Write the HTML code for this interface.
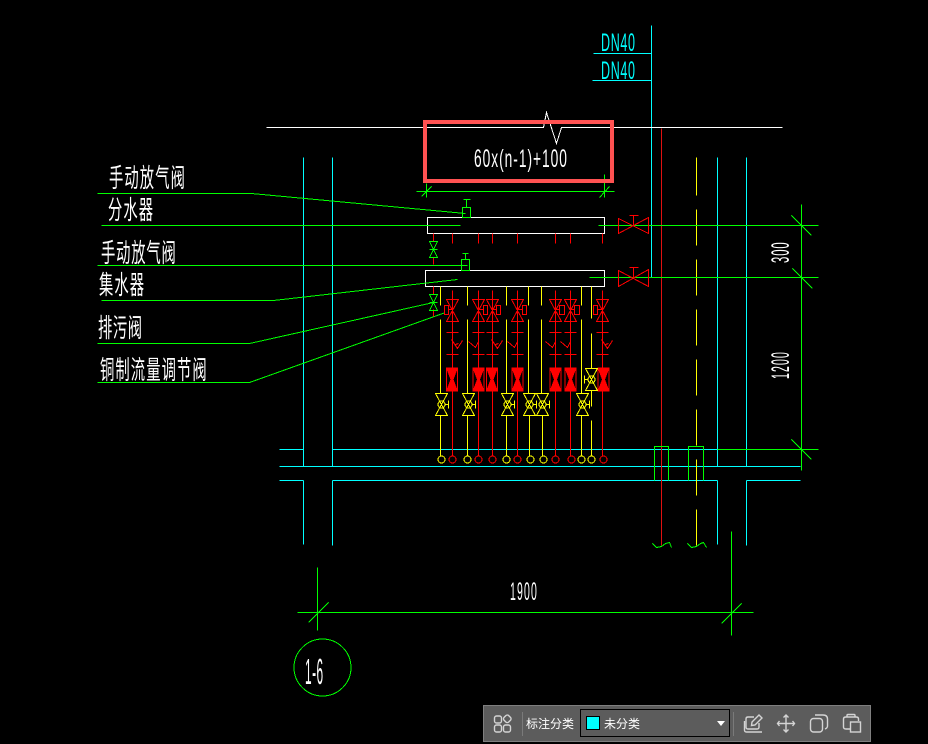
<!DOCTYPE html>
<html><head><meta charset="utf-8"><style>
html,body{margin:0;padding:0;background:#000;width:928px;height:744px;overflow:hidden}
svg{position:absolute;left:0;top:0}
.c{font-family:"Noto Sans CJK SC","Liberation Sans",sans-serif;fill:#fff;font-size:26px}
.l{font-family:"Liberation Sans",sans-serif;fill:#fff}
.tb{position:absolute;left:483px;top:705px;width:386px;height:35px;background:#5c5c5c;border:1px solid #7f7f7f}
.t{position:absolute;font:12px/16px "Liberation Sans","Noto Sans CJK SC",sans-serif;color:#fff;white-space:nowrap}
.sep{position:absolute;top:6px;width:1px;height:24px;background:#7a7a7a}
.sel{position:absolute;left:96px;top:3px;width:148px;height:26px;border:1px solid #000;background:#5c5c5c}
.sw{position:absolute;left:5px;top:6px;width:12px;height:12px;background:#0ff;border:1px solid #000}
.ar{position:absolute;left:136px;top:11px;width:0;height:0;border-left:4.5px solid transparent;border-right:4.5px solid transparent;border-top:5px solid #fff}
</style></head><body>
<svg width="928" height="744" viewBox="0 0 928 744" fill="none">
<defs>
<g id="rv" stroke="#f00"><path d="M-6 -11H6L-6 11H6Z"/></g>
<g id="rf"><rect x="-6" y="-12" width="12" height="24" fill="#f00"/><path d="M-5 -9L-1.5 0L-5 9ZM5 -9L1.5 0L5 9Z" fill="#000"/></g>
<g id="yv" stroke="#ff0"><path d="M-6 -11H6L-6 11H6Z"/><circle r="3.5"/><path d="M3 0H7M7 -4V4"/></g>
<g id="gv" stroke="#0f0"><path d="M-4 -8H4L-4 8H4Z"/><path d="M-4 0H4"/></g>
<g id="yr" stroke="#f00"><path d="M-1 -9L5 0L10 -8M3 -4L6 -5"/></g>
<g id="yl" stroke="#f00"><path d="M-10 -7L-3 -1L0 -7"/></g>
<g id="tk" stroke="#0f0"><path d="M-10 -10L10 10"/></g>
<g id="tk2" stroke="#0f0"><path d="M-10 10L10 -10"/></g>
</defs>
<g shape-rendering="crispEdges" transform="translate(.5 .5)">
<g stroke="#0ff">
<path d="M303 157V466M332 157V466M303 480V544M332 480V545"/>
<path d="M717 157V466M746 157V466M717 480V544M746 480V545"/>
<path d="M279 449H303M332 449H717M279 466H800M279 480H303M332 480H717M746 480H800"/>
<path d="M651 25V277M593 53H651M592 80H651"/>
</g>
<path d="M661 128V545" stroke="#e01010"/>
<path d="M696 157V195M696 209V245M696 259V295M696 309V345M696 359V395M696 409V445M696 459V495M696 509V545" stroke="#ff0"/>
<path d="M266 127H543L546 112L556 143L561 127H782" stroke="#fff"/>
<rect x="427" y="217" width="177" height="16" stroke="#fff"/>
<rect x="425" y="270" width="179" height="16" stroke="#fff"/>
<g stroke="#0f0">
<path d="M101 225H460M598 225H818M97 265H467M589 277H818M717 449H818M801 204V470"/>
<path d="M97 193H251L465 213M101 300H273L457 279M97 343H249L433 302M97 382H249L445 312"/>
<path d="M416 191H614M426 183V197M604 174V197"/>
<path d="M297 612H753M317 567V630M731 531V635"/>
<path d="M462 207H470V217H462ZM466 199V207M463 199H470M461 259H469V270H461ZM465 253V259M462 253H468"/>
<path d="M654 480V446H668V480M688 480V446H703V480"/>
<path d="M652 543L656 547L661 546L665 543L669 542L671 547M687 543L691 547L696 546L700 543L703 542L706 547"/>
<circle cx="322" cy="667" r="28.5"/>
</g>
<use href="#tk" x="801" y="225"/><use href="#tk" x="802" y="278"/><use href="#tk" x="801" y="449"/>
<use href="#tk2" x="318" y="612"/><use href="#tk2" x="731" y="613"/>
<path d="M421 196L431 186M599 197L609 186" stroke="#0f0"/>
<path d="M433 233V241M433 257V264M433 286V294M433 309V316" stroke="#f00"/>
<use href="#gv" x="433" y="249"/><use href="#gv" x="433" y="302"/>
<g stroke="#f00">
<path d="M452 233V243M478 233V243M492 233V243M517 233V243M555 233V243M570 233V243M602 233V243"/>
<path d="M452 290V455M478 290V455M492 290V455M517 290V455M555 290V455M570 290V455M602 290V455"/>
<path d="M446 332H458M472 332H484M486 332H498M511 332H523M549 332H561M564 332H576M596 332H608"/>
<path d="M446 354H458M472 354H484M486 354H498M511 354H523M549 354H561M564 354H576M596 354H608"/>
<path d="M618 218L648 233V217L618 233ZM633 225V215M629 215H638"/>
<path d="M618 270L648 286V269L618 286ZM633 278V267M629 267H638"/>
</g>
<g stroke="#ff0">
<path d="M440 286V305M467 286V305M506 286V305M528 286V305M541 286V305M581 286V305M591 286V318"/>
<path d="M440 319V393M467 319V393M506 319V393M528 319V393M541 319V393M581 319V393M591 333V368M591 390V406M591 420V455"/>
<path d="M440 415V455M467 415V455M506 415V455M529 415V455M542 415V455M581 415V455"/>
</g>
<use href="#rv" x="452" y="310"/><use href="#rv" x="478" y="310"/><use href="#rv" x="492" y="310"/><use href="#rv" x="517" y="310"/><use href="#rv" x="555" y="310"/><use href="#rv" x="570" y="310"/><use href="#rv" x="602" y="310"/>
<path stroke="#f00" d="M448 309H452M478 309H483M492 309H496M517 309H522M555 309H559M570 309H574M597 309H602"/>
<path fill="#000" stroke="#f00" d="M444 305h4v9h-4ZM483 305h4v9h-4ZM496 305h4v9h-4ZM522 305h4v9h-4ZM559 305h5v9h-5ZM574 305h5v9h-5ZM593 305h4v9h-4Z"/>
<use href="#yr" x="452" y="348"/><use href="#yl" x="478" y="348"/><use href="#yr" x="492" y="348"/><use href="#yl" x="517" y="348"/><use href="#yl" x="555" y="348"/><use href="#yl" x="570" y="348"/><use href="#yr" x="602" y="348"/>
<use href="#rf" x="451.5" y="379"/><use href="#rf" x="478" y="379"/><use href="#rf" x="491.5" y="379"/><use href="#rf" x="517" y="379"/><use href="#rf" x="555" y="379"/><use href="#rf" x="570" y="379"/><use href="#rf" x="603" y="379"/>
<use href="#yv" x="441" y="404"/><use href="#yv" x="468" y="404"/><use href="#yv" x="507" y="404"/><use href="#yv" x="529" y="404"/><use href="#yv" x="542" y="404"/><use href="#yv" x="582" y="404"/>
<g stroke="#ff0"><path d="M585 368H597L585 390H597Z"/><circle cx="591" cy="379" r="3.5"/><path d="M588 379H584M584 375V383"/></g>
<g stroke="#ff0"><circle cx="441" cy="459" r="3.5"/><circle cx="467" cy="459" r="3.5"/><circle cx="506" cy="459" r="3.5"/><circle cx="530" cy="459" r="3.5"/><circle cx="543" cy="459" r="3.5"/><circle cx="581" cy="459" r="3.5"/><circle cx="591" cy="459" r="3.5"/></g>
<g stroke="#f00"><circle cx="452" cy="459" r="3.5"/><circle cx="478" cy="459" r="3.5"/><circle cx="492" cy="459" r="3.5"/><circle cx="517" cy="459" r="3.5"/><circle cx="555" cy="459" r="3.5"/><circle cx="571" cy="459" r="3.5"/><circle cx="603" cy="459" r="3.5"/></g>
</g>
<rect x="425" y="122" width="187" height="59" stroke="#ff5252" stroke-width="4" shape-rendering="crispEdges"/>
<text class="c" transform="translate(109 187) scale(.55 1)" textLength="138" lengthAdjust="spacing">手动放气阀</text>
<text class="c" transform="translate(108 219) scale(.55 1)" textLength="82" lengthAdjust="spacing">分水器</text>
<text class="c" transform="translate(101 262) scale(.55 1)" textLength="136" lengthAdjust="spacing">手动放气阀</text>
<text class="c" transform="translate(99 294) scale(.55 1)" textLength="82" lengthAdjust="spacing">集水器</text>
<text class="c" transform="translate(98 337) scale(.55 1)" textLength="80" lengthAdjust="spacing">排污阀</text>
<text class="c" transform="translate(100 379) scale(.55 1)" textLength="194" lengthAdjust="spacing">铜制流量调节阀</text>
<text class="l" transform="translate(474 167) scale(.55 1)" font-size="25" textLength="169" lengthAdjust="spacing">60x(n-1)+100</text>
<text class="l" transform="translate(601 51) scale(.5 1)" font-size="25" textLength="68" lengthAdjust="spacing" style="fill:#0ff">DN40</text>
<text class="l" transform="translate(601 79) scale(.5 1)" font-size="25" textLength="68" lengthAdjust="spacing" style="fill:#0ff">DN40</text>
<text class="l" transform="translate(510 600) scale(.42 1)" font-size="25" textLength="64" lengthAdjust="spacing">1900</text>
<text class="l" transform="translate(305 684) scale(.33 1)" font-size="36" textLength="55" lengthAdjust="spacing">1-6</text>
<text class="l" transform="translate(789 263) rotate(-90) scale(.45 1)" font-size="25" textLength="46" lengthAdjust="spacing">300</text>
<text class="l" transform="translate(789 379) rotate(-90) scale(.42 1)" font-size="25" textLength="64" lengthAdjust="spacing">1200</text>
</svg>
<div class="tb">
<div class="sep" style="left:38px"></div>
<div class="t" style="left:42px;top:10px">标注分类</div>
<div class="sel"><div class="sw"></div><div class="t" style="left:23px;top:6px">未分类</div><div class="ar"></div></div>
<div class="sep" style="left:249px"></div>
</div>
<svg width="928" height="744" viewBox="0 0 928 744" fill="none" stroke="#d4d4d4" stroke-width="1.4">
<rect x="494.5" y="716" width="7" height="7" rx="2"/>
<rect x="504" y="715.5" width="6.5" height="6.5" rx="2" transform="rotate(45 507.2 718.8)"/>
<rect x="494.5" y="725" width="7" height="7" rx="2"/>
<rect x="503.5" y="725" width="7" height="7" rx="2"/>
<path d="M754 717H748Q746 717 746 719V727Q746 729 748 729H757Q759 729 759 727V723"/>
<path d="M744.5 721V730Q744.5 732 746.5 732H762"/>
<path d="M752 722L759 715L762 718L755 725L751.5 725.5Z"/>
<path d="M786 715V732M777.5 723.5H794.5M783.5 717.5L786 715L788.5 717.5M783.5 729.5L786 732L788.5 729.5M779.5 721L777.5 723.5L779.5 726M792.5 721L794.5 723.5L792.5 726"/>
<rect x="810.5" y="718.5" width="12" height="13.5" rx="3"/>
<path d="M815 715H823Q827.5 715 827.5 719V726Q827.5 728 825 729"/>
<path d="M850 729H846Q843.5 729 843.5 727V719Q843.5 717 846 717H856Q858.5 717 858.5 719V721"/>
<path d="M847 717V715.5Q847 714.5 848 714.5H854Q855 714.5 855 715.5V717"/>
<rect x="850.5" y="722" width="10" height="10"/>
</svg>
</body></html>
